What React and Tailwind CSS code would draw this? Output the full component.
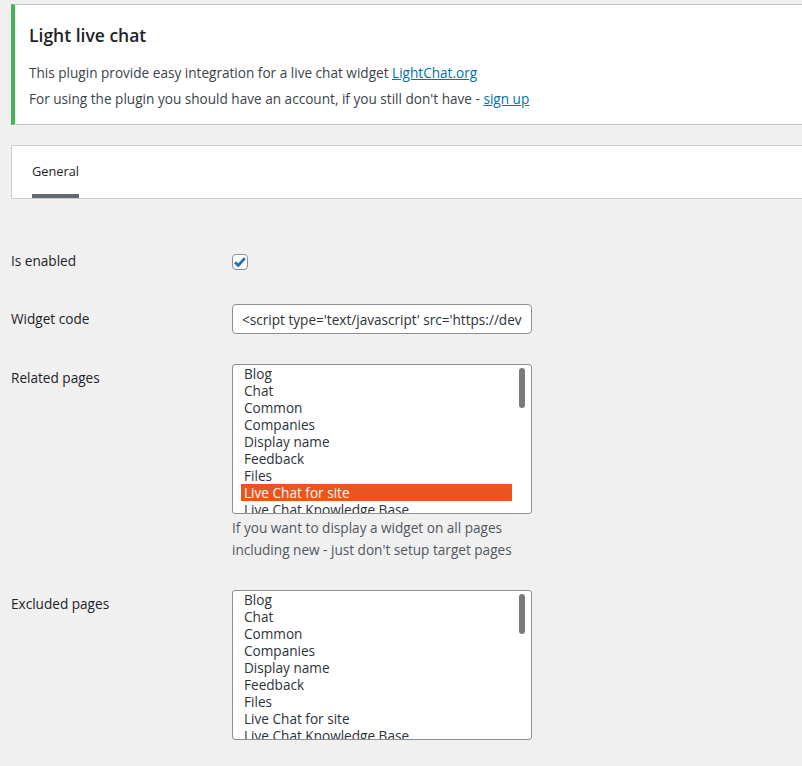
const pages = [
  "Blog",
  "Chat",
  "Common",
  "Companies",
  "Display name",
  "Feedback",
  "Files",
  "Live Chat for site",
  "Live Chat Knowledge Base",
];

function PageList({ selected }) {
  return (
    <div className="flex h-[150px] w-[300px] overflow-hidden rounded-[3px] border border-[#8c8f94] bg-white">
      <div className="flex-1 overflow-hidden pl-[8px]">
        {pages.map((p) => (
          <div
            key={p}
            className={
              p === selected
                ? "h-[17px] whitespace-nowrap bg-[#e95420] pl-[3px] text-[13.6px] leading-[17px] text-white"
                : "h-[17px] whitespace-nowrap pl-[3px] text-[13.6px] leading-[17px] text-[#2c3338]"
            }
          >
            {p}
          </div>
        ))}
      </div>
      <div className="flex w-[19px] justify-center pt-[3px] pl-[1px]">
        <div className="h-[40px] w-[6px] rounded-full bg-[#7a7a7a]" />
      </div>
    </div>
  );
}

export default function App() {
  return (
    <div className="min-h-[766px] overflow-hidden bg-[#f0f0f1] pl-[11px] pt-[4px] font-['Open_Sans',sans-serif] text-[13.6px] text-[#3c434a]">

      {/* Notice */}

      <div className="-mr-[10px] h-[121px] border-y border-l-4 border-y-[#c3c4c7] border-l-[#46b450] bg-white pl-[14px]">
        <h2 className="mt-[18px] text-[17.5px] font-semibold leading-[24px] text-[#1d2327]">
          Light live chat
        </h2>
        <p className="mt-[13px] leading-[26px]">
          This plugin provide easy integration for a live chat widget{" "}
          <a className="text-[#0073aa] underline">LightChat.org</a>
        </p>
        <p className="leading-[26px]">
          For using the plugin you should have an account, if you still don't have -{" "}
          <a className="text-[#0073aa] underline">sign up</a>
        </p>
      </div>

      {/* Tabs */}

      <div className="-mr-[10px] mt-[20px] flex h-[54px] border border-[#ccc] bg-white pl-[20px]">
        <div className="flex flex-col justify-end">
          <span className="text-[12.8px] leading-[18px] text-[#1d2327]">General</span>
          <div className="mt-[14px] h-[4px] bg-[#646970]" />
        </div>
      </div>

      {/* Form */}

      <div className="flex flex-col text-[#1d2327]">
        <div className="mt-[52px] flex items-start">
          <div className="w-[221px] leading-[20px]">Is enabled</div>
          <div className="mt-[3px] flex h-[16px] w-[16px] items-center justify-center rounded-[4px] border border-[#8c8f94] bg-white">
            <svg width="14" height="14" viewBox="0 0 20 20">
              <path d="M3 10.5l4.5 4.5 9.5-10.5" fill="none" stroke="#2271b1" strokeWidth="4" />
            </svg>
          </div>
        </div>

        <div className="mt-[33px] flex items-start">
          <div className="mt-[5px] w-[221px] leading-[20px]">Widget code</div>
          <input
            readOnly
            value="<script type='text/javascript' src='https://dev.lightchat.org/widget.js'></script>"
            className="h-[30px] w-[300px] rounded-[4px] border border-[#8c8f94] bg-white px-[9px] text-[13.6px] text-[#2c3338] outline-none"
          />
        </div>

        <div className="mt-[30px] flex items-start">
          <div className="mt-[4px] w-[221px] leading-[20px]">Related pages</div>
          <div>
            <PageList selected="Live Chat for site" />
            <p className="mt-[3px] leading-[22px] text-[#50575e]">
              If you want to display a widget on all pages
              <br />
              including new - just don't setup target pages
            </p>
          </div>
        </div>

        <div className="mt-[29px] flex items-start">
          <div className="mt-[4px] w-[221px] leading-[20px]">Excluded pages</div>
          <PageList />
        </div>
      </div>
    </div>
  );
}
